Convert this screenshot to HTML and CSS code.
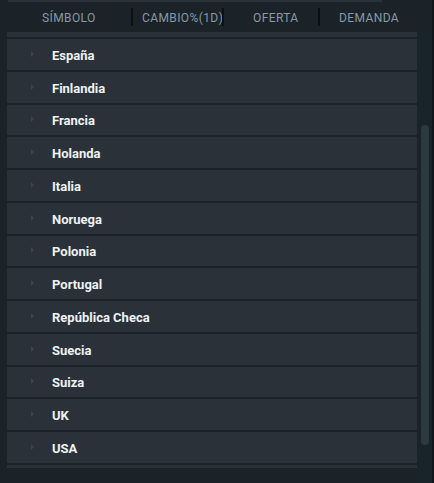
FILE: index.html
```html
<!DOCTYPE html>
<html lang="es">
<head>
<meta charset="utf-8">
<title>Mercados</title>
<link rel="stylesheet" href="styles.css">
</head>
<body>
<div class="page">
  <div class="main">
    <div class="topstrip"></div>
    <div class="header">
      <div class="hcell c1">SÍMBOLO</div>
      <div class="sep"></div>
      <div class="hcell c2">CAMBIO%(1D)</div>
      <div class="sep"></div>
      <div class="hcell c3">OFERTA</div>
      <div class="sep"></div>
      <div class="hcell c4">DEMANDA</div>
    </div>
    <div class="body">
      <div class="panel">
        <div class="row"><span class="tri"></span><span class="name">España</span></div>
        <div class="row"><span class="tri"></span><span class="name">Finlandia</span></div>
        <div class="row"><span class="tri"></span><span class="name">Francia</span></div>
        <div class="row"><span class="tri"></span><span class="name">Holanda</span></div>
        <div class="row"><span class="tri"></span><span class="name">Italia</span></div>
        <div class="row"><span class="tri"></span><span class="name">Noruega</span></div>
        <div class="row"><span class="tri"></span><span class="name">Polonia</span></div>
        <div class="row"><span class="tri"></span><span class="name">Portugal</span></div>
        <div class="row"><span class="tri"></span><span class="name">República Checa</span></div>
        <div class="row"><span class="tri"></span><span class="name">Suecia</span></div>
        <div class="row"><span class="tri"></span><span class="name">Suiza</span></div>
        <div class="row"><span class="tri"></span><span class="name">UK</span></div>
        <div class="row last"><span class="tri"></span><span class="name">USA</span></div>
      </div>
      <div class="track"><div class="thumb"></div></div>
    </div>
  </div>
  <div class="edge"></div>
</div>
</body>
</html>
```
FILE: styles.css
```css
html, body {
  margin: 0;
  padding: 0;
  background: #1b2329;
  font-family: Roboto, "Liberation Sans", Arial, sans-serif;
}
.page {
  display: flex;
  width: 434px;
  height: 483px;
  overflow: hidden;
}
.main {
  width: 432px;
}
.edge {
  width: 2px;
  background: #10161a;
}
.topstrip {
  margin-left: 8px;
  width: 374px;
  height: 2px;
  background: #2a3239;
}
.header {
  display: flex;
  align-items: center;
  height: 30px;
  padding-left: 7px;
}
.hcell {
  box-sizing: border-box;
  color: #8798a6;
  font-size: 12px;
  letter-spacing: 0.4px;
  white-space: nowrap;
  overflow: hidden;
  height: 30px;
  line-height: 28px;
  padding-top: 2px;
}
.c1 { width: 124px; padding-left: 35px; }
.c2 { width: 89px; padding-left: 9px; }
.c3 { width: 94px; padding-left: 29px; }
.c4 { width: 100px; padding-left: 19px; }
.sep {
  width: 2px;
  height: 18px;
  background: #0b0f12;
}
.body {
  display: flex;
  align-items: flex-start;
  height: 451px;
}
.panel {
  margin-left: 7px;
  width: 410px;
  background: #2a3139;
  padding-top: 5px;
  padding-bottom: 3px;
}
.row {
  display: flex;
  align-items: center;
  height: 30.75px;
  border-top: 2px solid #1c2328;
}
.row.last {
  border-bottom: 2px solid #1c2328;
}
.tri {
  width: 0;
  height: 0;
  border-top: 3.5px solid transparent;
  border-bottom: 3.5px solid transparent;
  border-left: 3px solid #3b464f;
  margin-left: 24px;
  margin-top: -1px;
}
.name {
  margin-left: 18px;
  padding-top: 2px;
  color: #eef2f5;
  font-size: 13px;
  font-weight: 700;
}
.track {
  width: 14px;
  height: 451px;
  background: #18242a;
  position: relative;
}
.thumb {
  position: absolute;
  left: 4px;
  top: 93px;
  width: 8px;
  height: 320px;
  border-radius: 4px;
  background: #2c393f;
}
```
